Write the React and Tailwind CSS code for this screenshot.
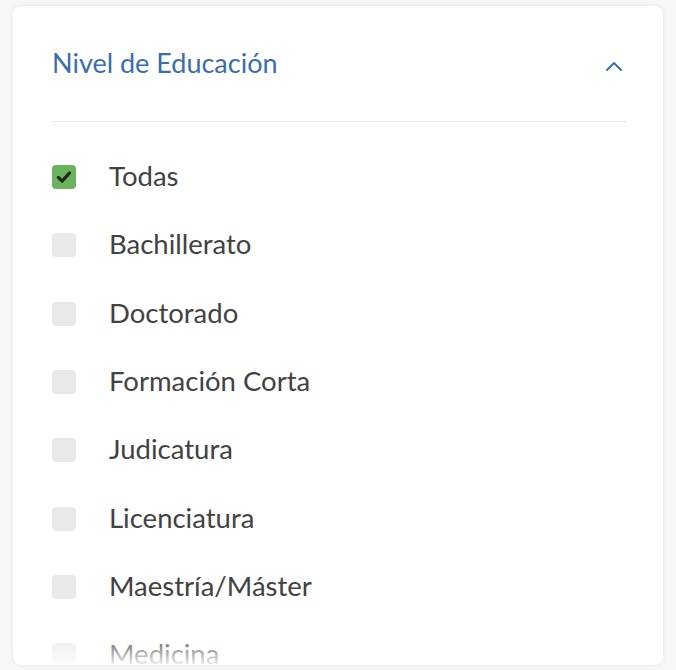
const levels = [
  { label: "Todas", checked: true },
  { label: "Bachillerato" },
  { label: "Doctorado" },
  { label: "Formación Corta" },
  { label: "Judicatura" },
  { label: "Licenciatura" },
  { label: "Maestría/Máster" },
  { label: "Medicina" },
];

function Box({ checked }) {
  if (checked) {
    return (
      <span className="flex items-center justify-center w-[24px] h-[24px] rounded-[4px] bg-[#6bb35c]">
        <svg width="18" height="18" viewBox="0 0 16 16" fill="none">
          <path d="M3 8.3l3.3 3.4L13 4.3" stroke="#1f2a1d" strokeWidth="2.8" strokeLinecap="round" strokeLinejoin="round" />
        </svg>
      </span>
    );
  }
  return <span className="block w-[24px] h-[24px] rounded-[4px] bg-[#e9e9e9]" />;
}

export default function App() {
  return (
    <div className="min-h-[670px] bg-[#f7f7f7] px-[13px] pt-[6px] pb-[5px]" style={{ fontFamily: "Lato, 'Open Sans', sans-serif" }}>
      <div className="relative h-[659px] overflow-hidden rounded-[8px] bg-white shadow-[0_0_4px_rgba(0,0,0,0.08)] px-[39px] pt-[38px] pr-[36px]">
        {/* HEADER */}
        <div className="flex items-center justify-between h-[36px]">
          <h2 className="text-[27px] text-[#3a6eae] leading-none">Nivel de Educación</h2>
          <svg width="18" height="12" viewBox="0 0 18 12" fill="none" className="mr-[4px] mt-[10px]">
            <path d="M2 9l7-7 7 7" stroke="#3a6eae" strokeWidth="2" strokeLinecap="round" strokeLinejoin="round" />
          </svg>
        </div>

        <div className="mt-[41px] border-t border-[#e6e6e6]" />

        {/* OPTIONS */}
        <div className="pt-[21px]">
          {levels.map((l) => (
            <div key={l.label} className="flex items-center h-[68.3px]">
              <Box checked={l.checked} />
              <span className="ml-[33px] -mt-[3px] text-[27.5px] text-[#424242]">{l.label}</span>
            </div>
          ))}
        </div>

        <div className="absolute left-0 right-0 bottom-0 h-[34px] bg-gradient-to-b from-white/0 to-white/90" />
      </div>
    </div>
  );
}
